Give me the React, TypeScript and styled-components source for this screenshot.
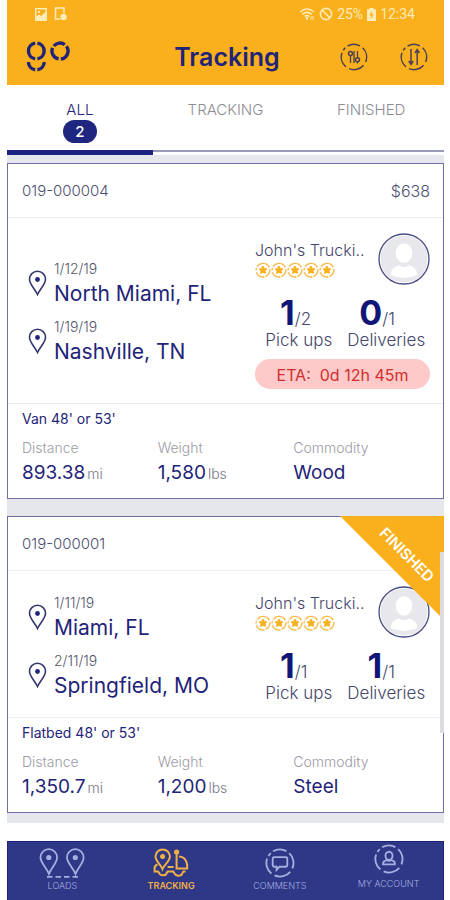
import React from "react";
import styled, { createGlobalStyle } from "styled-components";

const navy = "#1f2478";
const amber = "#f9b01c";

const GlobalStyle = createGlobalStyle`
  *, *::before, *::after { box-sizing: border-box; }
  body {
    margin: 0;
    background: #fff;
    font-family: Inter, "Open Sans", sans-serif;
    color: ${navy};
  }
  button { font: inherit; color: inherit; background: none; border: 0; padding: 0; cursor: pointer; }
  a { color: inherit; text-decoration: none; }
  h1, p, dl, dt, dd, ul, ol { margin: 0; padding: 0; }
  ul, ol { list-style: none; }
  svg { display: block; flex: none; }
`;

const Page = styled.div`
  min-height: 100vh;
  padding: 0 6px 0 7px;
  display: flex;
  flex-direction: column;
`;

const Header = styled.header`
  background: ${amber};
  height: 85px;
`;

const StatusBar = styled.div`
  height: 28px;
  padding: 0 29px 0 27px;
  display: flex;
  align-items: center;
  justify-content: space-between;
  color: #fdebb8;
  font-family: Roboto, sans-serif;
  font-size: 14px;
  line-height: 28px;
`;

const StatusGroup = styled.div<{ $gap: number }>`
  display: flex;
  align-items: center;
  gap: ${(p) => p.$gap}px;
`;

const AppBar = styled.div`
  height: 57px;
  padding: 0 16px 0 19px;
  display: grid;
  grid-template-columns: 1fr auto 1fr;
  align-items: center;
`;

const Title = styled.h1`
  font-size: 25px;
  line-height: 30px;
  font-weight: 600;
`;

const Actions = styled.div`
  display: flex;
  justify-content: flex-end;
  gap: 32px;
`;

const Tabs = styled.div`
  height: 70px;
  display: flex;
`;

const Tab = styled.button<{ $active?: boolean }>`
  flex: 1;
  display: flex;
  flex-direction: column;
  align-items: center;
  padding-top: 16px;
  font-size: 15px;
  line-height: 18px;
  font-weight: 300;
  color: ${(p) => (p.$active ? navy : "#8b8b92")};
  background: linear-gradient(${(p) => (p.$active ? "#1d2283, #1d2283" : "#9a9bb8, #9a9bb8")})
    no-repeat 0 65px / 100% ${(p) => (p.$active ? "5px" : "2px")};
`;

const Badge = styled.span`
  width: 34px;
  height: 23px;
  margin-top: 1px;
  border-radius: 12px;
  background: #1f2680;
  color: #fff;
  font-weight: 500;
  line-height: 24px;
`;

const Feed = styled.main`
  position: relative;
  background: #e6e7ec;
  padding: 8px 0 10px;
  display: flex;
  flex-direction: column;
  gap: 17px;
`;

const ScrollThumb = styled.div`
  position: absolute;
  right: 0;
  bottom: 90px;
  width: 4px;
  height: 181px;
  background: #dcdce3;
`;

const Card = styled.article`
  position: relative;
  background: #fff;
  border: 1px solid #6e6fa3;
`;

const CardHead = styled.div`
  height: 54px;
  padding: 0 13px 0 14px;
  display: flex;
  align-items: center;
  justify-content: space-between;
  border-bottom: 1px solid #ececf1;
  font-weight: 300;
  font-size: 15px;
  line-height: 20px;
  color: #4e4f70;
`;

const Price = styled.span`
  font-size: 16px;
`;

const CardBody = styled.div`
  padding: 15px 13px 14px 20px;
  display: flex;
  align-items: center;
  justify-content: space-between;
  border-bottom: 1px solid #ececf1;
`;

const Stops = styled.ol`
  display: flex;
  flex-direction: column;
  gap: 8px;
  padding-top: 6px;
`;

const Stop = styled.li`
  display: flex;
  align-items: center;
  gap: 7px;

  svg { margin-bottom: 4px; }
`;

const StopDate = styled.p`
  font-size: 14px;
  line-height: 18px;
  font-weight: 300;
  color: #55566a;
`;

const City = styled.p`
  font-size: 21px;
  line-height: 32px;
`;

const Side = styled.div`
  width: 175px;
  flex: none;
`;

const Carrier = styled.div`
  display: flex;
  align-items: center;
  justify-content: space-between;
  height: 52px;
`;

const CarrierName = styled.p`
  font-size: 16px;
  line-height: 20px;
  padding-bottom: 2px;
  height: 22px;
  font-weight: 300;
  color: #45466b;
  white-space: nowrap;
`;

const Counts = styled.div`
  display: grid;
  grid-template-columns: 1fr 1fr;
  margin-top: 9px;
  text-align: center;
`;

const CountValue = styled.p`
  display: grid;
  grid-template-columns: 1fr 1fr;
  align-items: baseline;
  height: 36px;
  padding-right: 8px;
  font-size: 17px;
  line-height: 38px;
  font-weight: 300;
  text-align: left;
  color: #45466b;
`;

const CountMain = styled.b`
  font-size: 34px;
  font-weight: 700;
  text-align: right;
  color: #101678;
`;

const CountLabel = styled.p`
  font-size: 17px;
  line-height: 20px;
  font-weight: 300;
  color: #45466b;
`;

const Eta = styled.p`
  margin-top: 9px;
  height: 30px;
  border-radius: 15px;
  background: #fdc9c9;
  color: #cf2f2f;
  font-size: 16px;
  line-height: 32px;
  text-align: center;
  white-space: pre;
`;

const CardFoot = styled.div`
  height: 94px;
  padding: 6px 14px 0;
`;

const Equipment = styled.p`
  font-size: 14px;
  line-height: 18px;
`;

const Specs = styled.dl`
  display: grid;
  grid-template-columns: repeat(3, 1fr);
  margin-top: 10px;
`;

const SpecLabel = styled.dt`
  font-size: 14px;
  line-height: 20px;
  font-weight: 300;
  color: #9b9ba3;
`;

const SpecValue = styled.dd`
  font-size: 19px;
  line-height: 30px;
`;

const Unit = styled.span`
  margin-left: 2px;
  font-size: 14px;
  font-weight: 300;
  color: #77778a;
`;

const Ribbon = styled.div`
  position: absolute;
  top: -1px;
  right: -1px;
  width: 104px;
  height: 104px;
  background: ${amber};
  clip-path: polygon(0 0, 100% 0, 100% 100%);
  display: flex;
  align-items: center;
  justify-content: center;
  padding: 0 0 26px 30px;
`;

const RibbonText = styled.span`
  transform: rotate(45deg);
  color: #fff;
  font-size: 15px;
  line-height: 18px;
  font-weight: 600;
`;

const BottomNav = styled.nav`
  margin-top: auto;
  height: 59px;
  background: #2f3787;
  border: solid #1c2375;
  border-width: 1px 1px 0;
  display: flex;
`;

const NavItem = styled.a<{ $active?: boolean; $raised?: boolean }>`
  flex: 1;
  display: flex;
  flex-direction: column;
  align-items: center;
  justify-content: space-between;
  padding: ${(p) => (p.$raised ? "2px 0 10px" : "6px 0 8px")};
  font-size: 9px;
  line-height: 12px;
  font-weight: ${(p) => (p.$active ? 600 : 300)};
  color: ${(p) => (p.$active ? "#f0b045" : "#a4b0e0")};
`;

const Logo = () => (
  <svg width="44" height="32" viewBox="0 0 44 32" role="img" aria-label="go" fill="none" stroke={navy} strokeWidth="3.4">
    <path d="M11.4 2.1A8 8 0 0 1 11.4 17.9M9.2 2.1A8 8 0 0 0 9.2 17.9" />
    <path d="M2.4 21A8 8 0 0 0 9.2 28.8M11.4 28.8A8 8 0 0 0 18.2 21" />
    <path d="M27.8 5A8 8 0 0 1 38.8 3.6M40.4 5.2A8 8 0 0 1 34.8 18M32.6 17.9A8 8 0 0 1 26.6 6.9" />
  </svg>
);

const ringPath = "M7.5 3.1A12.6 12.6 0 0 1 20 2.9M22.6 4.8A12.6 12.6 0 0 1 25.6 19M23.6 22.2A12.6 12.6 0 0 1 9 25.6M6 23.8A12.6 12.6 0 0 1 2 9.8M3.2 7.4A12.6 12.6 0 0 1 5.4 4.8";

const FilterIcon = () => (
  <svg width="28" height="28" viewBox="0 0 28 28" fill="none" stroke="#4c3f55" strokeWidth="1.5">
    <path d={ringPath} />
    <path d="M10.5 12.5V20M17.5 8V14.5M17.5 19V20.5M14 8V20" strokeWidth="1.3" />
    <circle cx="10.5" cy="10.5" r="2" />
    <circle cx="17.5" cy="16.8" r="2" />
  </svg>
);

const SortIcon = () => (
  <svg width="28" height="28" viewBox="0 0 28 28" fill="none" stroke="#4c3f55" strokeWidth="1.5">
    <path d={ringPath} />
    <path d="M11 6V20.5M8.8 18L11 21.3L13.2 18M17.2 22V7.5M15 10L17.2 6.7L19.4 10" />
  </svg>
);

const Pin = () => (
  <svg width="19" height="26" viewBox="0 0 19 26" fill="none" stroke="#34376f" strokeWidth="1.6">
    <path d="M9.5 24.5C7 19 1.5 14.5 1.5 9.3A8 8 0 0 1 17.5 9.3C17.5 14.5 12 19 9.5 24.5Z" />
    <circle cx="9.5" cy="9.5" r="2.4" fill={navy} stroke="none" />
  </svg>
);

const Stars = () => (
  <svg width="80" height="16" viewBox="0 0 80 16" role="img" aria-label="5 of 5 stars">
    {[0, 1, 2, 3, 4].map((i) => (
      <g key={i} transform={`translate(${i * 16} 0)`}>
        <path
          d="M2.2 4.5A7 7 0 0 1 14.4 5.4M14.8 7A7 7 0 0 1 10.4 14.4M9.4 14.8A7 7 0 0 1 1.2 10.2M1 8.4A7 7 0 0 1 1.6 5.8"
          fill="none"
          stroke="#f4bd4c"
          strokeWidth="1.4"
        />
        <path d="M8 4L9.3 6.5L11.8 6.9L10 8.8L10.4 11.3L8 10.4L5.6 11.3L6 8.8L4.2 6.9L6.7 6.5Z" fill={amber} stroke={amber} strokeLinejoin="round" />
      </g>
    ))}
  </svg>
);

const Avatar = () => (
  <svg width="52" height="52" viewBox="0 0 52 52" role="img" aria-label="Driver">
    <circle cx="26" cy="26" r="25" fill="#fff" stroke="#4a4c83" strokeWidth="1.3" />
    <circle cx="26" cy="26" r="23.6" fill="#e7e7ec" />
    <ellipse cx="26" cy="20" rx="8.3" ry="9.8" fill="#fff" />
    <path d="M12.5 42C13 35 19 32.5 21.5 32.5Q26 35.5 30.5 32.5C33 32.5 39 35 39.5 42Q26 48 12.5 42Z" fill="#fff" />
  </svg>
);

const LoadsIcon = () => (
  <svg width="46" height="30" viewBox="0 0 46 30" fill="none" stroke="currentColor" strokeWidth="1.8">
    <path d="M10 26C8 20 1.5 15 1.5 9.5A8.3 8.3 0 0 1 18.1 9.5C18.1 15 12 20 10 26ZM36.5 26C34.5 20 28 15 28 9.5A8.3 8.3 0 0 1 44.6 9.5C44.6 15 38.5 20 36.5 26Z" />
    <circle cx="9.8" cy="9.5" r="2.6" fill="currentColor" stroke="none" />
    <circle cx="36.3" cy="9.5" r="2.6" fill="currentColor" stroke="none" />
    <path d="M8 28.8H39" strokeDasharray="5.5 3" />
  </svg>
);

const TruckIcon = () => (
  <svg width="36" height="30" viewBox="0 0 36 30" fill="none" stroke="currentColor" strokeWidth="2">
    <path d="M9.5 21C8 16.5 2.5 13.5 2.5 8.6A7.2 7.2 0 0 1 16.9 8.6C16.9 13.5 11.2 16.5 9.5 21Z" />
    <circle cx="9.6" cy="8.6" r="2.5" fill="currentColor" stroke="none" />
    <path d="M4.5 16.5Q1.2 18 1.6 20.5V23.6H5.2Q7.5 28.6 12.6 26.8L14.6 23.6H20.4Q23 29.4 28.4 27L30.4 23.6H32.5" />
    <path d="M23.6 6V20.4H34.2V17Q33 8.6 26 8.4M14.6 19H20.6" />
    <circle cx="23.6" cy="4" r="2.6" fill="currentColor" stroke="none" />
  </svg>
);

const CommentIcon = () => (
  <svg width="30" height="30" viewBox="0 0 28 28" fill="none" stroke="currentColor" strokeWidth="1.7">
    <path d={ringPath} />
    <path d="M8.5 8.5H19.5Q20.8 8.5 20.8 9.8V16.2Q20.8 17.5 19.5 17.5H13.5L10.8 20.5V17.5H8.5Q7.2 17.5 7.2 16.2V9.8Q7.2 8.5 8.5 8.5Z" />
  </svg>
);

const AccountIcon = () => (
  <svg width="30" height="30" viewBox="0 0 28 28" fill="none" stroke="currentColor" strokeWidth="1.7">
    <path d={ringPath} />
    <ellipse cx="14" cy="11" rx="3.3" ry="3.8" />
    <path d="M8.5 19V18Q8.5 15.8 11.8 15Q14 16.6 16.2 15Q19.5 15.8 19.5 18V19Z" />
  </svg>
);

const PictureIcon = () => (
  <svg width="14" height="13" viewBox="0 0 14 13">
    <path fill="currentColor" fillRule="evenodd" d="M1 0H13V13H1ZM2.5 1.5V8.5L5 6.5L7 8L11.5 4V1.5ZM4 3H6V5H4Z" />
  </svg>
);

const NoteIcon = () => (
  <svg width="14" height="14" viewBox="0 0 14 14" fill="none" stroke="currentColor" strokeWidth="1.6">
    <path d="M6 12H1.5V1H10V6" />
    <circle cx="9.5" cy="10" r="2.4" fill="currentColor" />
  </svg>
);

const WifiIcon = () => (
  <svg width="16" height="14" viewBox="0 0 16 14" fill="none" stroke="currentColor" strokeWidth="1.5">
    <path d="M1 5Q8 -1 15 5M3.4 7.3Q8 3.5 12.6 7.3M5.6 9.5Q8 7.7 10.4 9.5" />
    <path d="M7 10.5H9L8 13ZM12 9V13M14 9V13" fill="currentColor" strokeWidth="1" />
  </svg>
);

const BlockIcon = () => (
  <svg width="14" height="14" viewBox="0 0 14 14" fill="none" stroke="currentColor" strokeWidth="1.6">
    <circle cx="7" cy="7" r="5.6" />
    <path d="M3 3L11 11" />
  </svg>
);

const BatteryIcon = () => (
  <svg width="9" height="13" viewBox="0 0 9 13">
    <path fill="currentColor" fillRule="evenodd" d="M2.5 0H6.5V1.3H9V13H0V1.3H2.5ZM5.3 3L2.2 7.5H4.2L3.7 11L6.8 6.4H4.8Z" />
  </svg>
);

type Load = {
  id: string;
  price?: string;
  stops: [string, string][];
  pickups: [number, number];
  deliveries: [number, number];
  eta?: string;
  equipment: string;
  distance: string;
  weight: string;
  commodity: string;
  finished?: boolean;
};

const loads: Load[] = [
  {
    id: "019-000004",
    price: "$638",
    stops: [["1/12/19", "North Miami, FL"], ["1/19/19", "Nashville, TN"]],
    pickups: [1, 2],
    deliveries: [0, 1],
    eta: "ETA:  0d 12h 45m",
    equipment: "Van 48' or 53'",
    distance: "893.38",
    weight: "1,580",
    commodity: "Wood",
  },
  {
    id: "019-000001",
    stops: [["1/11/19", "Miami, FL"], ["2/11/19", "Springfield, MO"]],
    pickups: [1, 1],
    deliveries: [1, 1],
    equipment: "Flatbed 48' or 53'",
    distance: "1,350.7",
    weight: "1,200",
    commodity: "Steel",
    finished: true,
  },
];

const Count = ({ value, label }: { value: [number, number]; label: string }) => (
  <div>
    <CountValue><CountMain>{value[0]}</CountMain><span>/{value[1]}</span></CountValue>
    <CountLabel>{label}</CountLabel>
  </div>
);

const Spec = ({ label, value, unit }: { label: string; value: string; unit?: string }) => (
  <div>
    <SpecLabel>{label}</SpecLabel>
    <SpecValue>{value}{unit && <Unit>{unit}</Unit>}</SpecValue>
  </div>
);

const LoadCard = ({ load }: { load: Load }) => (
  <Card>
    <CardHead>
      <span>{load.id}</span>
      {load.price && <Price>{load.price}</Price>}
    </CardHead>
    <CardBody>
      <Stops>
        {load.stops.map(([date, city]) => (
          <Stop key={city}>
            <Pin />
            <div>
              <StopDate>{date}</StopDate>
              <City>{city}</City>
            </div>
          </Stop>
        ))}
      </Stops>
      <Side>
        <Carrier>
          <div>
            <CarrierName>John's Trucki..</CarrierName>
            <Stars />
          </div>
          <Avatar />
        </Carrier>
        <Counts>
          <Count value={load.pickups} label="Pick ups" />
          <Count value={load.deliveries} label="Deliveries" />
        </Counts>
        {load.eta && <Eta>{load.eta}</Eta>}
      </Side>
    </CardBody>
    <CardFoot>
      <Equipment>{load.equipment}</Equipment>
      <Specs>
        <Spec label="Distance" value={load.distance} unit="mi" />
        <Spec label="Weight" value={load.weight} unit="lbs" />
        <Spec label="Commodity" value={load.commodity} />
      </Specs>
    </CardFoot>
    {load.finished && <Ribbon><RibbonText>FINISHED</RibbonText></Ribbon>}
  </Card>
);

export default function App() {
  return (
    <>
      <GlobalStyle />
      <Page>
        <Header>
          <StatusBar>
            <StatusGroup $gap={6}><PictureIcon /><NoteIcon /></StatusGroup>
            <StatusGroup $gap={4}>
              <WifiIcon /><BlockIcon /><span>25%</span><BatteryIcon /><span>12:34</span>
            </StatusGroup>
          </StatusBar>
          <AppBar>
            <Logo />
            <Title>Tracking</Title>
            <Actions>
              <button aria-label="Filter"><FilterIcon /></button>
              <button aria-label="Sort"><SortIcon /></button>
            </Actions>
          </AppBar>
        </Header>
        <Tabs>
          <Tab $active>ALL<Badge>2</Badge></Tab>
          <Tab>TRACKING</Tab>
          <Tab>FINISHED</Tab>
        </Tabs>
        <Feed>
          {loads.map((load) => <LoadCard key={load.id} load={load} />)}
          <ScrollThumb />
        </Feed>
        <BottomNav>
          <NavItem href="#loads"><LoadsIcon />LOADS</NavItem>
          <NavItem href="#tracking" $active><TruckIcon />TRACKING</NavItem>
          <NavItem href="#comments"><CommentIcon />COMMENTS</NavItem>
          <NavItem href="#account" $raised><AccountIcon />MY ACCOUNT</NavItem>
        </BottomNav>
      </Page>
    </>
  );
}
